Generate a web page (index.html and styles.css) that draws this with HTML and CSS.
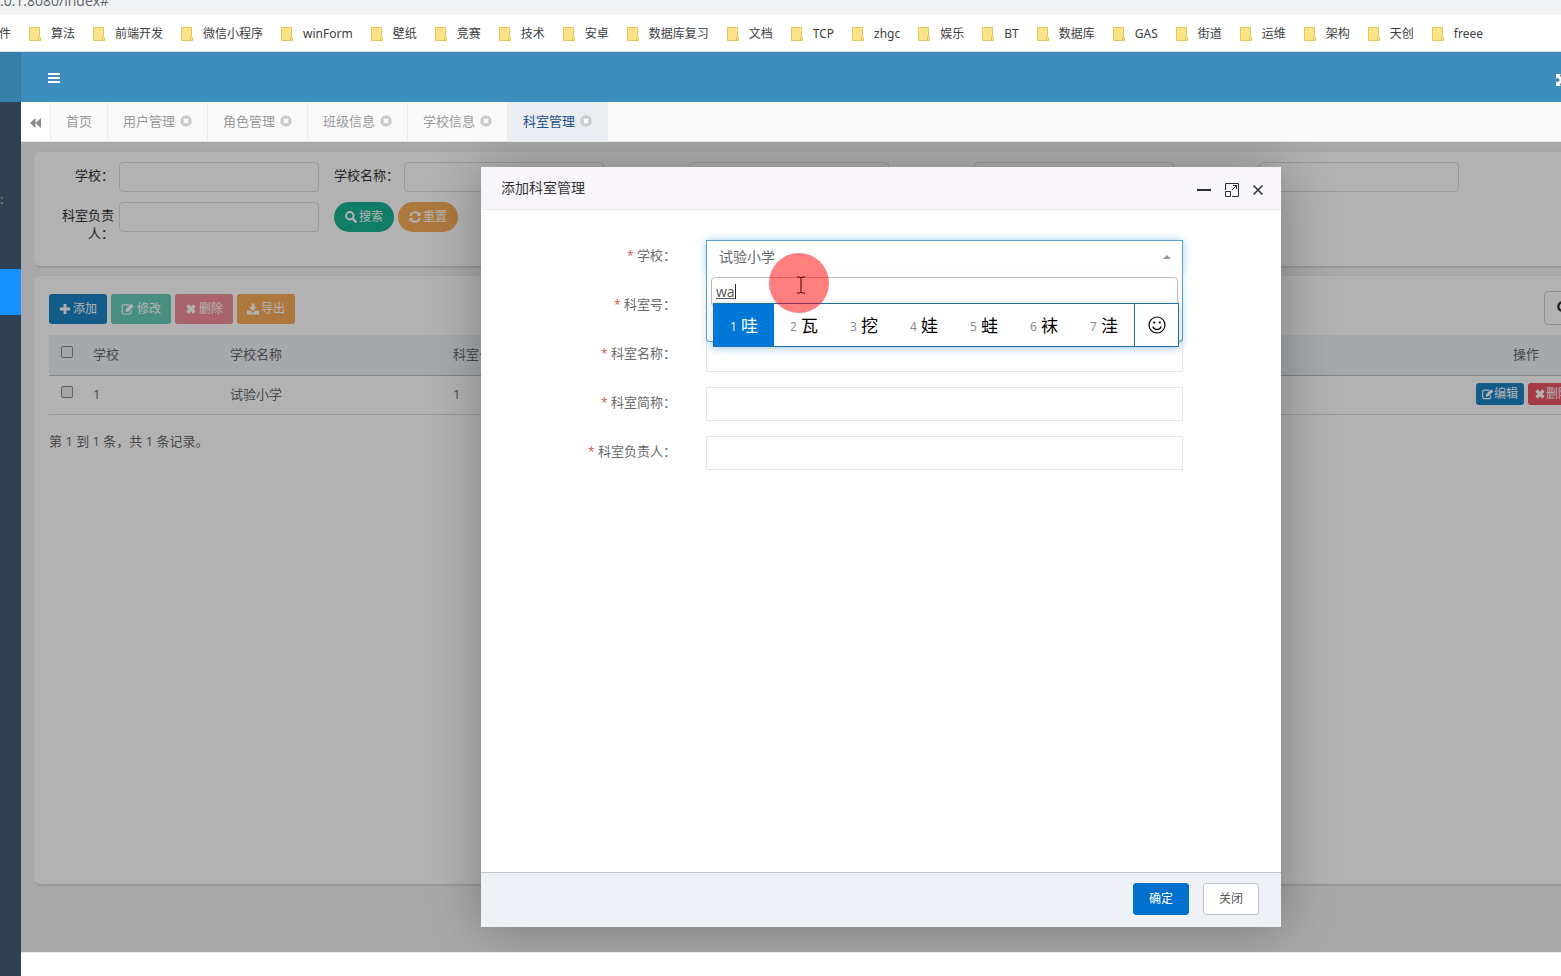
FILE: index.html
```html
<!DOCTYPE html>
<html lang="zh-CN">
<head>
<meta charset="utf-8">
<title>科室管理</title>
<link rel="stylesheet" href="styles.css">
</head>
<body>
<svg class="defs" aria-hidden="true">
  <symbol id="folder" viewBox="0 0 12 14"><path d="M.5.5h10v9l1 1v3H.5z" fill="#fbe38a" stroke="#e6c65c"/><path d="M9.500 13.500v-3l1-2" fill="none" stroke="#e0bd50"/></symbol>
  <symbol id="close-circle" viewBox="0 0 12 12"><circle cx="6" cy="6" r="5.800" fill="#ccc"/><path d="M4 4l4 4M8 4l-4 4" stroke="#fff" stroke-width="1.800"/></symbol>
  <symbol id="search" viewBox="0 0 12 12"><circle cx="4.800" cy="4.800" r="3.700" fill="none" stroke="currentColor" stroke-width="2"/><path d="M7.600 7.600l3.200 3.200" stroke="currentColor" stroke-width="2.400" stroke-linecap="round"/></symbol>
  <symbol id="refresh" viewBox="0 0 12 12"><path d="M1.300 5A4.800 4.800 0 0 1 9.500 2.700M10.700 7A4.800 4.800 0 0 1 2.500 9.300" fill="none" stroke="currentColor" stroke-width="2"/><path d="M11.500.8V5H7.300zM.5 11.200V7h4.200z" fill="currentColor"/></symbol>
  <symbol id="plus" viewBox="0 0 12 12"><path d="M6 1v10M1 6h10" stroke="currentColor" stroke-width="2.800"/></symbol>
  <symbol id="edit" viewBox="0 0 13 12"><path d="M9.500 7.500v2a1.500 1.500 0 0 1-1.500 1.500H2.200A1.500 1.500 0 0 1 .7 9.500V3.300a1.500 1.500 0 0 1 1.500-1.500H8" fill="none" stroke="currentColor" stroke-width="1.200"/><path d="M4.300 8.700V6.300L9.800.8l2.400 2.400-5.500 5.500z" fill="currentColor"/></symbol>
  <symbol id="times" viewBox="0 0 12 12"><path d="M2.500 2.500l7 7M9.500 2.500l-7 7" stroke="currentColor" stroke-width="3.200"/></symbol>
  <symbol id="download" viewBox="0 0 12 12"><path d="M4.500.5h3V4H10L6 8 2 4h2.500zM0 7.500h3.500L6 10l2.500-2.500H12v4H0z" fill="currentColor"/></symbol>
</svg>

<div class="address">0.0.1:8080/index#</div>
<nav class="bookmarks" aria-label="书签">
  <a href="#">件</a>
  <a href="#"><svg><use href="#folder"/></svg>算法</a>
  <a href="#"><svg><use href="#folder"/></svg>前端开发</a>
  <a href="#"><svg><use href="#folder"/></svg>微信小程序</a>
  <a href="#"><svg><use href="#folder"/></svg>winForm</a>
  <a href="#"><svg><use href="#folder"/></svg>壁纸</a>
  <a href="#"><svg><use href="#folder"/></svg>竞赛</a>
  <a href="#"><svg><use href="#folder"/></svg>技术</a>
  <a href="#"><svg><use href="#folder"/></svg>安卓</a>
  <a href="#"><svg><use href="#folder"/></svg>数据库复习</a>
  <a href="#"><svg><use href="#folder"/></svg>文档</a>
  <a href="#"><svg><use href="#folder"/></svg>TCP</a>
  <a href="#"><svg><use href="#folder"/></svg>zhgc</a>
  <a href="#"><svg><use href="#folder"/></svg>娱乐</a>
  <a href="#"><svg><use href="#folder"/></svg>BT</a>
  <a href="#"><svg><use href="#folder"/></svg>数据库</a>
  <a href="#"><svg><use href="#folder"/></svg>GAS</a>
  <a href="#"><svg><use href="#folder"/></svg>街道</a>
  <a href="#"><svg><use href="#folder"/></svg>运维</a>
  <a href="#"><svg><use href="#folder"/></svg>架构</a>
  <a href="#"><svg><use href="#folder"/></svg>天创</a>
  <a href="#"><svg><use href="#folder"/></svg>freee</a>
</nav>

<div class="app">
  <aside class="sidebar">
    <div class="brand"></div>
    <div class="status">:</div>
    <a class="current" href="#" aria-label="科室管理"></a>
  </aside>
  <div class="workspace">
    <header class="topbar">
      <button class="plain" aria-label="菜单"><svg width="12" height="10" viewBox="0 0 12 10"><path d="M0 1h12M0 5h12M0 9h12" stroke="#fff" stroke-width="2"/></svg></button>
      <button class="plain full" aria-label="全屏"><svg width="12" height="12" viewBox="0 0 12 12" fill="#fff"><path d="M0 0h5L3.500 1.500 6 4l2.500-2.500L7 0h5v5l-1.500-1.500L8 6l2.500 2.500L12 7v5H7l1.500-1.500L6 8l-2.500 2.500L5 12H0V7l1.500 1.500L4 6 1.500 3.500 0 5z"/></svg></button>
    </header>
    <nav class="tabs" aria-label="页签">
      <button class="back" aria-label="向左"><svg width="12" height="11" viewBox="0 0 12 11"><path d="M6 0v11L0 5.500zM12 0v11L6 5.500z" fill="#888"/></svg></button>
      <a href="#">首页</a>
      <a href="#">用户管理<svg><use href="#close-circle"/></svg></a>
      <a href="#">角色管理<svg><use href="#close-circle"/></svg></a>
      <a href="#">班级信息<svg><use href="#close-circle"/></svg></a>
      <a href="#">学校信息<svg><use href="#close-circle"/></svg></a>
      <a class="active" href="#">科室管理<svg><use href="#close-circle"/></svg></a>
    </nav>

    <main class="content">
      <form class="panel filters">
        <div class="field"><label for="f1">学校：</label><input id="f1"></div>
        <div class="field"><label for="f2">学校名称：</label><input id="f2"></div>
        <div class="field"><label for="f3">科室号：</label><input id="f3"></div>
        <div class="field"><label for="f4">科室名称：</label><input id="f4"></div>
        <div class="field"><label for="f5">科室简称：</label><input id="f5"></div>
        <div class="field"><label for="f6">科室负责人：</label><input id="f6"></div>
        <div class="actions">
          <button type="button" class="btn pill green"><svg><use href="#search"/></svg>搜索</button>
          <button type="button" class="btn pill orange"><svg><use href="#refresh"/></svg>重置</button>
        </div>
      </form>

      <section class="panel list">
        <div class="toolbar">
          <button class="btn blue"><svg><use href="#plus"/></svg>添加</button>
          <button class="btn green faded"><svg class="wide"><use href="#edit"/></svg>修改</button>
          <button class="btn red faded"><svg><use href="#times"/></svg>删除</button>
          <button class="btn orange"><svg><use href="#download"/></svg>导出</button>
          <button class="tool" aria-label="搜索"><svg width="14" height="14"><use href="#search"/></svg></button>
        </div>
        <table>
          <colgroup><col class="c-check"><col class="c-school"><col class="c-name"><col><col class="c-action"></colgroup>
          <thead><tr><th><input type="checkbox" aria-label="全选"></th><th>学校</th><th>学校名称</th><th>科室号</th><th class="mid">操作</th></tr></thead>
          <tbody><tr><td><input type="checkbox" aria-label="选择"></td><td>1</td><td>试验小学</td><td>1</td><td class="mid"><button class="btn mini blue"><svg><use href="#edit"/></svg>编辑</button><button class="btn mini red"><svg><use href="#times"/></svg>删除</button></td></tr></tbody>
        </table>
        <p>第 1 到 1 条，共 1 条记录。</p>
      </section>

      <div class="shade">
        <section class="dialog" role="dialog" aria-labelledby="dialog-title">
          <header class="dialog-head">
            <h2 id="dialog-title">添加科室管理</h2>
            <button class="plain" aria-label="最小化"><svg width="14" height="14" viewBox="0 0 14 14"><path d="M0 7h14" stroke="#2e2d3c" stroke-width="2"/></svg></button>
            <button class="plain" aria-label="最大化"><svg width="14" height="14" viewBox="0 0 14 14" fill="none" stroke="#2e2d3c"><path d="M.5 7V.5h13v13H7M.5 8.500h5v5h-5zM7 7l4.500-4.500M8 2.500h3.500V6"/></svg></button>
            <button class="plain" aria-label="关闭窗口"><svg width="10" height="10" viewBox="0 0 10 10"><path d="M.5.5l9 9M9.500.5l-9 9" stroke="#2e2d3c" stroke-width="1.500"/></svg></button>
          </header>
          <form class="dialog-body">
            <label for="d1"><i>*</i> 学校：</label>
            <div class="combo">
              <select id="d1"><option>试验小学</option></select>
              <svg class="arrow" width="8" height="4" viewBox="0 0 8 4"><path d="M0 4l4-4 4 4z" fill="#999"/></svg>
              <div class="dropdown">
                <input value="wa" aria-label="查找学校">
                <span class="caret"></span>
                <ol class="ime">
                  <li class="chosen"><small>1</small>哇</li>
                  <li><small>2</small>瓦</li>
                  <li><small>3</small>挖</li>
                  <li><small>4</small>娃</li>
                  <li><small>5</small>蛙</li>
                  <li><small>6</small>袜</li>
                  <li><small>7</small>洼</li>
                  <li class="emoji"><svg width="18" height="18" viewBox="0 0 18 18" fill="none" stroke="#000" stroke-width="1.200"><circle cx="9" cy="9" r="8"/><path d="M4.800 10.500c1.500 4 6.900 4 8.400 0"/><circle cx="6.200" cy="6.500" r=".5" fill="#000"/><circle cx="11.800" cy="6.500" r=".5" fill="#000"/></svg></li>
                </ol>
              </div>
            </div>
            <label for="d2"><i>*</i> 科室号：</label><input id="d2">
            <label for="d3"><i>*</i> 科室名称：</label><input id="d3">
            <label for="d4"><i>*</i> 科室简称：</label><input id="d4">
            <label for="d5"><i>*</i> 科室负责人：</label><input id="d5">
          </form>
          <footer class="dialog-foot">
            <button class="ok">确定</button>
            <button>关闭</button>
          </footer>
          <div class="pointer"><svg width="8" height="18" viewBox="0 0 8 18"><path d="M0 1h3l1 1 1-1h3M4 2v14M0 17h3l1-1 1 1h3" fill="none" stroke="#400" stroke-width="1"/></svg></div>
        </section>
      </div>
    </main>
    <footer class="page-foot"></footer>
  </div>
</div>
</body>
</html>
```
FILE: styles.css
```css
* { box-sizing: border-box; }
body, button, input, select {
  font-family: "Open Sans", "Noto Sans CJK SC", sans-serif;
  font-size: 13px;
  line-height: 18px;
}
body {
  margin: 0;
  height: 100vh;
  display: flex;
  flex-direction: column;
  overflow: hidden;
  color: #676a6c;
}
a { color: inherit; text-decoration: none; }
button { cursor: pointer; }
.defs { position: absolute; width: 0; height: 0; }
.plain { display: flex; padding: 0; border: 0; background: none; }

/* browser bars */
.address {
  flex: none;
  height: 15px;
  display: flex;
  align-items: flex-end;
  padding-bottom: 5px;
  margin-left: -8px;
  background: #f1f2f4;
  color: #5f6368;
  font-size: 14px;
}
.bookmarks {
  flex: none;
  height: 37px;
  display: flex;
  align-items: center;
  gap: 18px;
  margin-left: -1px;
  padding-top: 1px;
  border-bottom: 1px solid #dde3e6;
  background: #fff;
  color: #3c4043;
  font-family: "Noto Sans", "Noto Sans CJK SC", sans-serif;
  font-size: 12px;
  white-space: nowrap;
}
.bookmarks a { display: flex; align-items: center; gap: 10px; }
.bookmarks svg { width: 12px; height: 14px; }

/* application frame */
.app { flex: 1; min-height: 0; display: flex; }
.sidebar { flex: none; width: 21px; background: #2f4050; color: #8a97a3; }
.brand { height: 50px; background: #367fa9; }
.status { height: 167px; padding-top: 88px; }
.current { display: block; height: 46px; background: #1890ff; }
.workspace {
  flex: none;
  width: calc(100% + 159px);
  display: flex;
  flex-direction: column;
}
.topbar {
  height: 50px;
  display: flex;
  align-items: center;
  justify-content: space-between;
  padding: 2px 173px 0 27px;
  background: #3c8dbc;
}
.full { padding-top: 4px; }
.tabs {
  height: 40px;
  display: flex;
  border-bottom: 1px solid #e7e7e7;
  background: #fafafa;
  color: #999;
}
.tabs > * {
  display: flex;
  align-items: center;
  gap: 5px;
  padding: 0 15px 2px;
  border: 0;
  border-right: 1px solid #eee;
}
.tabs svg { width: 12px; height: 12px; }
.tabs .back { width: 30px; padding: 2px 9px 0; background: #fff; }
.tabs .active { background: #eaedf1; color: #23508e; }
.content {
  position: relative;
  flex: 1;
  display: flex;
  flex-direction: column;
  gap: 10px;
  padding: 10px 13px 68px;
  background: #f3f3f4;
}
.page-foot { height: 24px; background: #fff; border-top: 1px solid #e7eaec; }
.panel {
  border-radius: 6px;
  background: #fff;
  box-shadow: 1px 1px 3px rgba(0, 0, 0, .2);
}

/* filters */
.filters {
  display: flex;
  flex-wrap: wrap;
  gap: 4px 15px;
  padding: 10px 180px 24px 15px;
  color: #333;
}
.field { display: flex; width: 270px; align-items: flex-start; }
.field label { width: 70px; padding: 4px 5px 0 0; text-align: right; }
.field input {
  width: 200px;
  height: 30px;
  margin-bottom: 6px;
  border: 1px solid #ddd;
  border-radius: 4px;
  background: transparent;
}
.actions { display: flex; align-items: flex-start; gap: 4px; }

/* buttons */
.btn {
  height: 30px;
  display: inline-flex;
  align-items: center;
  gap: 2px;
  padding: 0 10px;
  border: 0;
  border-radius: 3px;
  color: #fff;
  font-size: 12px;
}
.btn svg { width: 12px; height: 12px; }
.btn .wide { width: 14px; }
.pill { border-radius: 15px; padding: 0 11px; }
.blue { background: #1c84c6; }
.green { background: #1ab394; }
.red { background: #ed5565; }
.orange { background: #f8ac59; }
.faded { opacity: .65; }
.mini { height: 22px; gap: 0; padding: 0 6px; }

/* list */
.list { flex: 1; padding: 15px; }
.toolbar { display: flex; align-items: center; gap: 4px; height: 34px; margin-bottom: 10px; }
.toolbar .btn { margin-top: 2px; }
.tool {
  width: 169px;
  height: 34px;
  display: flex;
  align-items: center;
  margin-left: auto;
  padding: 0 12px;
  border: 1px solid #ccc;
  border-radius: 4px;
  background: #fff;
  color: #333;
}
table { width: 100%; table-layout: fixed; border-collapse: collapse; }
.c-check { width: 36px; }
.c-school { width: 137px; }
.c-name { width: 223px; }
.c-action { width: 374px; }
th, td { height: 39px; padding: 0 8px 2px; text-align: left; font-weight: 400; border-bottom: 1px solid #ddd; }
th { height: 40px; background: #edf3f6; border-bottom-color: #bbb; }
th input, td input {
  display: block;
  width: 12px;
  height: 12px;
  margin: 0 0 4px 4px;
  appearance: none;
  border: 1px solid #8c8c8c;
  border-radius: 2px;
  background: #eee;
}
.mid { text-align: center; }
.mid .btn + .btn { margin-left: 4px; }
.list p { margin: 17px 0 0; }

/* dialog */
.shade {
  position: absolute;
  inset: 0;
  display: flex;
  align-items: center;
  justify-content: center;
  background: rgba(0, 0, 0, .3);
  overflow: hidden;
}
.dialog {
  position: relative;
  width: 800px;
  height: 760px;
  display: flex;
  flex-direction: column;
  background: #fff;
  box-shadow: 1px 1px 50px rgba(0, 0, 0, .3);
}
.dialog-head {
  height: 43px;
  display: flex;
  align-items: center;
  gap: 14px;
  padding: 0 18px 0 20px;
  border-bottom: 1px solid #eee;
  background: #f8f6fa;
}
.dialog-head h2 { flex: 1; margin: 0; color: #333; font-size: 14px; font-weight: 400; }
.dialog-head .plain { margin-top: 3px; }
.dialog-body {
  flex: 1;
  display: grid;
  grid-template-columns: 195px 1fr;
  grid-auto-rows: 34px;
  gap: 15px 30px;
  padding: 30px 98px 0 0;
}
.dialog-body > label { padding-top: 6px; text-align: right; }
.dialog-body i { color: #d9534f; font-size: 12px; font-style: normal; }
.dialog-body > input { border: 1px solid #e5e6e7; width: 100%; background: #fff; }
.combo { position: relative; z-index: 1; box-shadow: 0 0 8px rgba(102, 175, 233, .6); }
.combo select {
  width: 100%;
  height: 34px;
  padding: 0 12px;
  appearance: none;
  border: 1px solid #5b9fd0;
  border-bottom-color: #f4f4f4;
  border-radius: 0;
  background: #fff;
  color: #676a6c;
  font-size: 14px;
}
.arrow { position: absolute; right: 12px; top: 15px; }
.dropdown {
  position: absolute;
  top: 33px;
  left: 0;
  right: 0;
  height: 69px;
  padding: 4px;
  border: 1px solid #5b9fd0;
  border-top: 0;
  border-radius: 0 0 4px 4px;
  background: #fff;
  box-shadow: 0 4px 8px rgba(102, 175, 233, .3);
}
.dropdown input {
  display: block;
  width: 100%;
  height: 30px;
  padding: 0 4px 2px;
  border: 1px solid #bbb;
  border-radius: 4px;
  color: #555;
  font-size: 14px;
  text-decoration: underline;
}
.caret { position: absolute; left: 28px; top: 11px; width: 1px; height: 15px; background: #222; }
.ime {
  position: absolute;
  left: 6px;
  right: 3px;
  top: 30px;
  height: 44px;
  display: flex;
  margin: 0;
  padding: 0;
  border: 1px solid #1f6ea5;
  background: #fff;
  color: #000;
  font-size: 17px;
  list-style: none;
  box-shadow: 0 2px 8px rgba(0, 90, 160, .25);
}
.ime li { flex: 1; display: flex; align-items: center; justify-content: center; gap: 4px; padding-top: 2px; }
.ime small { padding-top: 2px; color: #888; font-size: 12px; }
.ime .chosen, .ime .chosen small { background: #0078d7; color: #fff; }
.ime .emoji { flex: 0 0 44px; padding-top: 0; border-left: 1px solid #1f6ea5; }
.dialog-foot {
  height: 55px;
  display: flex;
  align-items: center;
  justify-content: flex-end;
  gap: 14px;
  padding: 0 22px 2px;
  border-top: 1px solid #c0c6cc;
  background: #eef2f6;
}
.dialog-foot button {
  width: 56px;
  height: 32px;
  border: 1px solid #c0c4cc;
  border-radius: 3px;
  background: #fff;
  color: #555;
  font-size: 12px;
}
.dialog-foot .ok { border-color: #0070cc; background: #0070cc; color: #fff; }
.pointer {
  position: absolute;
  z-index: 2;
  left: 288px;
  top: 86px;
  width: 60px;
  height: 60px;
  display: flex;
  align-items: center;
  justify-content: center;
  padding: 3px 0 0 4px;
  border-radius: 50%;
  background: rgba(255, 0, 0, .5);
}
```
